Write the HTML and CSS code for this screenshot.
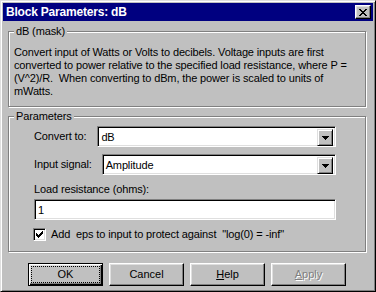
FILE: index.html
```html
<!DOCTYPE html>
<html lang="en">
<head>
    <meta charset="UTF-8">
    <title>Block Parameters: dB</title>
    <link rel="stylesheet" href="styles.css">
</head>
<body>
<div class="window">
    <div class="titlebar">
        <span class="title">Block Parameters: dB</span>
        <button class="close" aria-label="Close">
            <svg width="8" height="7" viewBox="0 0 8 7" shape-rendering="crispEdges"><path d="M0 0h2v1H0z M6 0h2v1H6z M1 1h2v1H1z M5 1h2v1H5z M2 2h4v1H2z M3 3h2v1H3z M2 4h4v1H2z M1 5h2v1H1z M5 5h2v1H5z M0 6h2v1H0z M6 6h2v1H6z" fill="#000"/></svg>
        </button>
    </div>

    <div class="group mask">
        <span class="legend">dB (mask)</span>
        <p class="desc">Convert input of Watts or Volts to decibels. Voltage inputs are first<br>converted to power relative to the specified load resistance, where P =<br>(V^2)/R.&nbsp; When converting to dBm, the power is scaled to units of<br>mWatts.</p>
    </div>

    <div class="group params">
        <span class="legend">Parameters</span>
        <div class="row">
            <label>Convert to:</label>
            <div class="combo">
                <span class="value">dB</span>
                <span class="arrow"><svg width="7" height="4" viewBox="0 0 7 4" shape-rendering="crispEdges"><path d="M0 0h7v1H0z M1 1h5v1H1z M2 2h3v1H2z M3 3h1v1H3z" fill="#000"/></svg></span>
            </div>
        </div>
        <div class="row second">
            <label>Input signal:</label>
            <div class="combo">
                <span class="value">Amplitude</span>
                <span class="arrow"><svg width="7" height="4" viewBox="0 0 7 4" shape-rendering="crispEdges"><path d="M0 0h7v1H0z M1 1h5v1H1z M2 2h3v1H2z M3 3h1v1H3z" fill="#000"/></svg></span>
            </div>
        </div>
        <label class="field-label">Load resistance (ohms):</label>
        <div class="textbox">1</div>
        <div class="check-row">
            <span class="checkbox"><svg width="7" height="7" viewBox="0 0 7 7" shape-rendering="crispEdges"><path d="M6 0h1v1H6z M5 1h2v1H5z M0 2h1v1H0z M4 2h3v1H4z M0 3h2v1H0z M3 3h3v1H3z M0 4h5v1H0z M1 5h3v1H1z M2 6h1v1H2z" fill="#000"/></svg></span>
            <span class="check-label">Add&nbsp; eps to input to protect against&nbsp; "log(0) = -inf"</span>
        </div>
    </div>

    <div class="buttons">
        <button class="btn default"><span class="focus">OK</span></button>
        <button class="btn"><span class="focus-none">Cancel</span></button>
        <button class="btn"><span class="focus-none"><u>H</u>elp</span></button>
        <button class="btn disabled"><span class="focus-none"><u>A</u>pply</span></button>
    </div>
</div>
</body>
</html>
```

FILE: styles.css
```css
body {
    margin: 0;
    background: #c0c0c0;
    font-family: "Liberation Sans", Arial, sans-serif;
    font-size: 11px;
    letter-spacing: -0.13px;
    line-height: 13px;
    color: #000;
}
.window {
    width: 376px;
    height: 292px;
    box-sizing: border-box;
    border: 1px solid;
    border-color: #dfdfdf #000 #000 #dfdfdf;
    box-shadow: inset 1px 1px #fff, inset -1px -1px #808080;
    padding: 2px;
    background: #c0c0c0;
}
.titlebar {
    height: 18px;
    background: #000080;
    color: #fff;
    display: flex;
    align-items: center;
    justify-content: space-between;
    padding: 0 2px 0 3px;
}
.title {
    font-weight: bold;
    font-size: 12px;
    letter-spacing: -0.2px;
}
.close {
    width: 16px;
    height: 14px;
    padding: 0;
    box-sizing: border-box;
    background: #c0c0c0;
    border: 1px solid;
    border-color: #fff #000 #000 #fff;
    box-shadow: inset -1px -1px #808080, inset 1px 1px #dfdfdf;
    display: flex;
    align-items: center;
    justify-content: center;
}
.close svg {
    display: block;
    margin: 0 0 0 0;
}

.group {
    position: relative;
    box-sizing: border-box;
    width: 358px;
    margin-left: 5px;
    border: 1px solid #808080;
    box-shadow: inset 1px 1px #fff, 1px 1px #fff;
}
.legend {
    position: absolute;
    top: -7px;
    left: 5px;
    padding: 0 2px;
    background: #c0c0c0;
}
.mask {
    margin-top: 10px;
    height: 76px;
    padding: 14px 5px 8px 5px;
}
.desc {
    margin: 0;
    white-space: nowrap;
}
.params {
    margin-top: 9px;
    height: 136px;
    padding: 9px 29px 10px 25px;
}

.row {
    display: flex;
    align-items: center;
    gap: 11px;
}
.row.second {
    margin-top: 7px;
    gap: 10px;
}
.combo {
    flex: 1;
    height: 21px;
    box-sizing: border-box;
    background: #fff;
    border: 1px solid;
    border-color: #808080 #fff #fff #808080;
    box-shadow: inset 1px 1px #000, inset -1px -1px #dfdfdf;
    padding: 2px 2px 2px 2px;
    display: flex;
}
.combo .value {
    flex: 1;
    padding-left: 1px;
    line-height: 17px;
}
.arrow {
    width: 16px;
    height: 17px;
    box-sizing: border-box;
    background: #c0c0c0;
    border: 1px solid;
    border-color: #dfdfdf #000 #000 #dfdfdf;
    box-shadow: inset 1px 1px #fff, inset -1px -1px #808080;
    display: flex;
    align-items: center;
    justify-content: center;
}
.arrow svg {
    display: block;
}

.field-label {
    display: block;
    margin-top: 8px;
}
.textbox {
    margin-top: 3px;
    height: 21px;
    box-sizing: border-box;
    background: #fff;
    border: 1px solid;
    border-color: #808080 #fff #fff #808080;
    box-shadow: inset 1px 1px #000, inset -1px -1px #dfdfdf;
    padding: 2px 2px 2px 3px;
    line-height: 17px;
}
.check-row {
    margin-top: 8px;
    display: flex;
    align-items: center;
    margin-left: -1px;
}
.checkbox {
    width: 13px;
    height: 13px;
    box-sizing: border-box;
    background: #fff;
    border: 1px solid;
    border-color: #808080 #fff #fff #808080;
    box-shadow: inset 1px 1px #000, inset -1px -1px #dfdfdf;
    display: flex;
    align-items: center;
    justify-content: center;
}
.checkbox svg {
    display: block;
}
.check-label {
    margin-left: 5px;
}

.buttons {
    margin-top: 11px;
    padding-left: 25px;
    display: flex;
    gap: 6px;
}
.btn {
    width: 75px;
    height: 23px;
    box-sizing: border-box;
    padding: 2px;
    background: #c0c0c0;
    font: inherit;
    color: #000;
    border: 1px solid;
    border-color: #fff #000 #000 #fff;
    box-shadow: inset -1px -1px #808080, inset 1px 1px #dfdfdf;
    display: flex;
}
.btn.default {
    border-color: #000;
    box-shadow: inset 1px 1px #fff, inset -1px -1px #000, inset -2px -2px #808080, inset 2px 2px #dfdfdf;
}
.focus, .focus-none {
    flex: 1;
    display: flex;
    align-items: center;
    justify-content: center;
    border: 1px dotted transparent;
}
.focus {
    border-color: #000;
}
.btn.disabled {
    color: #808080;
    text-shadow: 1px 1px #fff;
}
```
